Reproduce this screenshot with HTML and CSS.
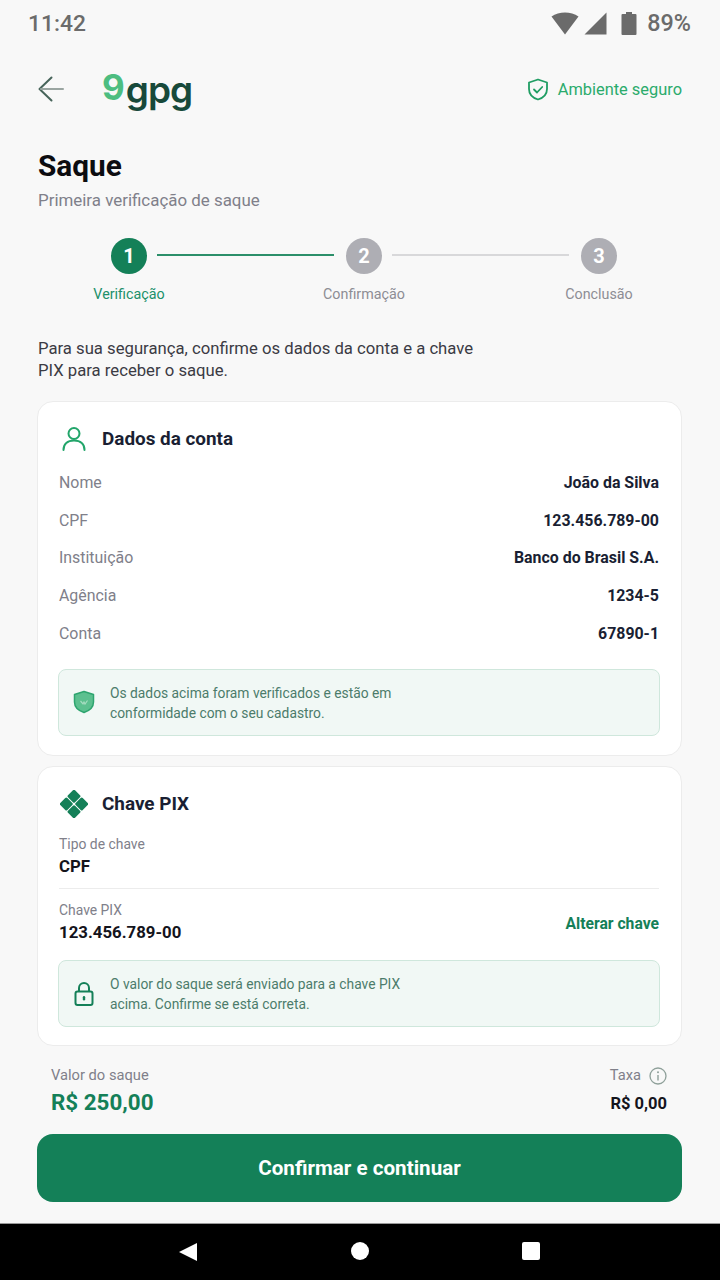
FILE: index.html
```html
<!DOCTYPE html>
<html lang="pt-BR">
<head>
<meta charset="utf-8">
<title>Saque</title>
<link rel="stylesheet" href="styles.css">
</head>
<body>
<div class="screen">
  <div class="status">
    <span class="time">11:42</span>
    <div class="status-icons">
      <svg class="ic-wifi" width="30" height="24" viewBox="0 0 30 24"><path d="M1.500 5.500C9 .2 21 .2 28.500 5.500L15 23.500Z" fill="#6b6b6b"/></svg>
      <svg class="ic-signal" width="23" height="23" viewBox="0 0 23 23"><path d="M22.500 .5V22.500H.5Z" fill="#6b6b6b"/></svg>
      <svg class="ic-batt" width="16" height="23" viewBox="0 0 16 23"><path d="M5 0h6v2h3.500a1 1 0 0 1 1 1v19a1 1 0 0 1-1 1H1.500a1 1 0 0 1-1-1V3a1 1 0 0 1 1-1H5Z" fill="#6b6b6b"/></svg>
      <span class="pct">89%</span>
    </div>
  </div>

  <header class="topbar">
    <svg class="back" width="26" height="26" viewBox="0 0 26 26" fill="none"><path d="M13.500 1.500 1.500 13l12 11.500" stroke="#47645a" stroke-width="2" stroke-linecap="round" stroke-linejoin="round"/><path d="M3 13h22" stroke="#9aa5a1" stroke-width="2" stroke-linecap="round"/></svg>
    <div class="logo"><span class="logo-nine">9</span><span class="logo-gpg">gpg</span></div>
    <div class="secure">
      <svg width="22" height="23" viewBox="0 0 22 23" fill="none"><path d="M11 1.500 20 4.500V11c0 5-3.500 8.800-9 10.500C5.500 19.800 2 16 2 11V4.500Z" stroke="#1f9d63" stroke-width="1.800" stroke-linejoin="round"/><path d="m7 11.500 3 3 5.200-5.500" stroke="#1f9d63" stroke-width="1.800" stroke-linecap="round" stroke-linejoin="round"/></svg>
      <span>Ambiente seguro</span>
    </div>
  </header>

  <main class="content">
    <h1 class="title">Saque</h1>
    <p class="subtitle">Primeira verificação de saque</p>

    <div class="stepper">
      <span class="dot dot-on">1</span>
      <span class="line line-on"></span>
      <span class="dot">2</span>
      <span class="line"></span>
      <span class="dot">3</span>
    </div>
    <div class="step-labels">
      <span class="step-label step-label-on">Verificação</span>
      <span class="step-label">Confirmação</span>
      <span class="step-label">Conclusão</span>
    </div>

    <p class="intro">Para sua segurança, confirme os dados da conta e a chave<br>PIX para receber o saque.</p>

    <section class="card card-account">
      <div class="card-head">
        <svg class="card-icon" width="28" height="26" viewBox="0 0 28 26" fill="none"><circle cx="14" cy="7.500" r="5.500" stroke="#22a56a" stroke-width="2"/><path d="M3.500 24c0-6 4-9.500 10.500-9.500S24.500 18 24.500 24" stroke="#22a56a" stroke-width="2" stroke-linecap="round"/></svg>
        <h2>Dados da conta</h2>
      </div>
      <dl class="rows">
        <div class="row"><dt>Nome</dt><dd>João da Silva</dd></div>
        <div class="row"><dt>CPF</dt><dd>123.456.789-00</dd></div>
        <div class="row"><dt>Instituição</dt><dd>Banco do Brasil S.A.</dd></div>
        <div class="row"><dt>Agência</dt><dd>1234-5</dd></div>
        <div class="row"><dt>Conta</dt><dd>67890-1</dd></div>
      </dl>
      <div class="note">
        <svg width="22" height="24" viewBox="0 0 22 24"><path d="M11 1.500 20.500 4.500V12c0 5-3.800 8.600-9.500 10.500C5.300 20.600 1.500 17 1.500 12V4.500Z" fill="#5cc08f" stroke="#2ea56f" stroke-width="1.500" stroke-linejoin="round"/><path d="m7.500 11 2.500 3 1-2 1 2 2.500-3.500" fill="none" stroke="#a5dcc0" stroke-width="1.200"/></svg>
        <p>Os dados acima foram verificados e estão em<br>conformidade com o seu cadastro.</p>
      </div>
    </section>

    <section class="card card-pix">
      <div class="card-head">
        <svg class="card-icon" width="28" height="28" viewBox="0 0 28 28" fill="#148058"><rect x="9" y="1.300" width="10" height="10" rx="1.500" transform="rotate(45 14 6.300)"/><rect x="9" y="16.700" width="10" height="10" rx="1.500" transform="rotate(45 14 21.700)"/><rect x="1.300" y="9" width="10" height="10" rx="1.500" transform="rotate(45 6.300 14)"/><rect x="16.700" y="9" width="10" height="10" rx="1.500" transform="rotate(45 21.700 14)"/></svg>
        <h2>Chave PIX</h2>
      </div>
      <div class="field field-first">
        <div>
          <div class="field-label">Tipo de chave</div>
          <div class="field-value">CPF</div>
        </div>
      </div>
      <div class="field">
        <div>
          <div class="field-label">Chave PIX</div>
          <div class="field-value">123.456.789-00</div>
        </div>
        <span class="change">Alterar chave</span>
      </div>
      <div class="note note-pix">
        <svg width="22" height="26" viewBox="0 0 22 26" fill="none"><rect x="2.500" y="10.500" width="17" height="13.500" rx="2" stroke="#148058" stroke-width="2"/><path d="M6 10.500V7a5 5 0 0 1 10 0v3.500" stroke="#148058" stroke-width="2"/><rect x="9.800" y="15" width="2.400" height="4.500" rx="1.200" fill="#148058"/></svg>
        <p>O valor do saque será enviado para a chave PIX<br>acima. Confirme se está correta.</p>
      </div>
    </section>

    <div class="summary">
      <div>
        <div class="sum-label">Valor do saque</div>
        <div class="sum-amount">R$ 250,00</div>
      </div>
      <div class="sum-right">
        <div class="sum-label sum-fee">Taxa
          <svg width="18" height="18" viewBox="0 0 18 18" fill="none"><circle cx="9" cy="9" r="8" stroke="#8fa09a" stroke-width="1.300"/><circle cx="9" cy="5.300" r="1" fill="#8fa09a"/><path d="M9 8v5.500" stroke="#8fa09a" stroke-width="1.400"/></svg>
        </div>
        <div class="sum-fee-value">R$ 0,00</div>
      </div>
    </div>

    <button class="cta">Confirmar e continuar</button>
  </main>

  <nav class="navbar">
    <span class="nav-back"></span>
    <span class="nav-home"></span>
    <span class="nav-recent"></span>
  </nav>
</div>
</body>
</html>
```

FILE: styles.css
```css
* { box-sizing: border-box; }
html, body { margin: 0; padding: 0; }
body { background: #f8f8f8; font-family: Roboto, "Liberation Sans", sans-serif; }
h1, h2, p, dl, dd, dt { margin: 0; padding: 0; }

.screen { width: 720px; height: 1280px; display: flex; flex-direction: column; overflow: hidden; }

.status { height: 44px; padding: 2px 29px 0 28px; display: flex; justify-content: space-between; align-items: center; color: #6b6b6b; flex: none; }
.time { font-size: 22.800px; font-weight: 500; }
.status-icons { display: flex; align-items: center; }
.ic-signal { margin-left: 4px; }
.ic-batt { margin-left: 14px; }
.pct { margin-left: 10px; font-size: 23.300px; font-weight: 500; }

.topbar { height: 90px; flex: none; padding: 0 38px; display: flex; align-items: center; }
.back { flex: none; }
.logo { margin-left: 38px; font-family: Inter, Roboto, sans-serif; font-weight: 600; line-height: 40px; position: relative; top: 1px; display: flex; align-items: baseline; }
.logo-nine { color: #4dbd80; font-size: 35px; font-weight: 700; position: relative; top: -3px; margin-right: 1px; }
.logo-gpg { color: #17493a; font-size: 37px; letter-spacing: -1px; }
.secure { margin-left: auto; display: flex; align-items: center; gap: 9px; color: #2bab6c; font-size: 16.400px; }

.content { flex: 1; padding: 0 38px 0 37px; display: flex; flex-direction: column; }
.title { font-size: 29.800px; font-weight: 700; line-height: 36px; color: #0c0c10; margin-left: 1px; margin-top: 14px; }
.subtitle { font-size: 16.900px; line-height: 24px; color: #80808a; margin-left: 1px; margin-top: 4px; }

.stepper { display: flex; align-items: center; margin: 26px 65px 0 74px; }
.dot { width: 36px; height: 36px; border-radius: 50%; background: #aeaeb4; color: #fff; font-size: 20px; font-weight: 700; display: flex; align-items: center; justify-content: center; flex: none; }
.dot-on { background: #148058; }
.line { flex: 1; height: 2px; background: #d8d8da; margin: 0 12px 2px 10px; }
.line-on { background: #2c8f6a; }
.step-labels { display: grid; grid-template-columns: repeat(3, 235px); margin: 10px 0 0 -25.500px; }
.step-label { text-align: center; font-size: 14.300px; line-height: 20px; color: #8d8d94; }
.step-label-on { color: #20906a; }

.intro { margin-top: 34px; margin-left: 1px; font-size: 16.700px; line-height: 22px; color: #3b3b44; }

.card { background: #fff; border: 1px solid #ececec; border-radius: 16px; padding: 0 22px 0 21px; }
.card-account { margin-top: 19px; height: 355px; }
.card-pix { margin-top: 10px; height: 280px; }
.card-head { display: flex; align-items: center; height: 28px; margin-top: 23px; }
.card-icon { flex: none; width: 28px; margin-left: 1px; }
.card-head h2 { margin-left: 14px; font-size: 18.900px; line-height: 28px; font-weight: 700; color: #1a1f33; }

.rows { margin-top: 10.500px; }
.row { display: flex; justify-content: space-between; align-items: center; height: 37.800px; }
.row dt { font-size: 15.900px; color: #80808a; }
.row dd { font-size: 15.900px; font-weight: 700; color: #1a1f33; }

.note { display: flex; align-items: center; height: 67px; margin: 0 -1px; background: #f1f8f5; border: 1px solid #cfe7dc; border-radius: 8px; padding: 0 0 0 14px; gap: 15px; }
.card-account .note { margin-top: 16.500px; }
.note p { font-size: 13.820px; line-height: 20px; color: #4c7c6b; margin-top: 1px; }
.note svg { flex: none; }

.field { display: flex; justify-content: space-between; align-items: center; height: 66px; }
.field-first { height: 60px; margin-top: 11px; border-bottom: 1px solid #ececec; padding-bottom: 5px; }
.field-label { font-size: 13.900px; line-height: 20px; color: #80808a; }
.field-value { font-size: 16.800px; font-weight: 700; line-height: 24px; color: #14141c; }
.change { color: #148058; font-size: 15.700px; font-weight: 700; margin-top: 2px; }
.note-pix { margin-top: 5px; }

.summary { display: flex; justify-content: space-between; margin: 18px 15px 0 14px; height: 70px; }
.sum-label { font-size: 14.700px; line-height: 23px; color: #80808a; }
.sum-amount { font-size: 22.400px; font-weight: 700; line-height: 30px; color: #148058; }
.sum-right { display: flex; flex-direction: column; align-items: flex-end; }
.sum-fee { display: flex; align-items: center; gap: 8px; }
.sum-fee-value { font-size: 16.500px; font-weight: 700; line-height: 24px; color: #14141c; margin-top: 5px; }

.cta { height: 68px; border: 0; border-radius: 16px; background: #148058; color: #fff; font-family: inherit; font-size: 20.600px; font-weight: 700; width: 645px; flex: none; }

.navbar { height: 57px; flex: none; background: #000; position: relative; display: flex; border-top: 1px solid #999; }
.nav-back { position: absolute; left: 179px; top: 19px; width: 0; height: 0; border-style: solid; border-width: 9px 18px 9px 0; border-color: transparent #fff transparent transparent; }
.nav-home { position: absolute; left: 351px; top: 18px; width: 18px; height: 18px; border-radius: 50%; background: #fff; }
.nav-recent { position: absolute; left: 522px; top: 18px; width: 18px; height: 18px; border-radius: 2px; background: #fff; }
```
